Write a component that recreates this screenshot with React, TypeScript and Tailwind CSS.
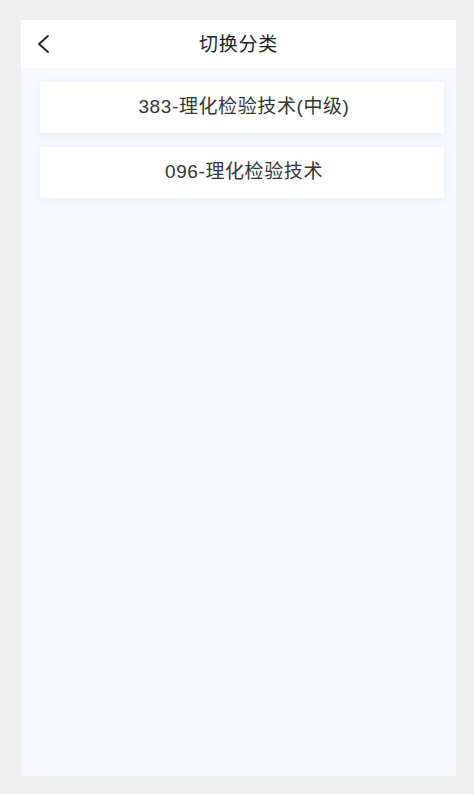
const CATEGORIES = ["383-理化检验技术(中级)", "096-理化检验技术"];

export default function App() {
  return (
    <div
      className="flex h-[794px] w-full flex-col bg-[#efefef] pb-[18px] pl-[21px] pr-[18px] pt-5 text-[#353535]"
      style={{ fontFamily: '"Liberation Sans", "Noto Sans CJK SC", sans-serif' }}
    >
      <div className="flex flex-1 flex-col bg-[#f7f9fe]">
        {/* 顶部标题栏 */}
        <header className="relative flex h-12 items-center justify-center bg-white">
          <button className="absolute left-4 top-[15px] flex h-[18px] w-3 items-center" aria-label="返回">
            <svg width="12" height="18" viewBox="0 0 12 18" fill="none">
              <path d="M11 1 L2 9 L11 17" stroke="#222" strokeWidth="1.8" strokeLinecap="round" strokeLinejoin="round" />
            </svg>
          </button>
          <h1 className="mt-[3px] text-[19px] font-normal tracking-[0.8px] text-[#222]">切换分类</h1>
        </header>

        {/* 分类列表 */}
        <div className="flex flex-col gap-[14px] pl-[19px] pr-3 pt-[14px]">
          {CATEGORIES.map((name) => (
            <div
              key={name}
              className="flex h-[51px] items-center justify-center bg-white pl-1 text-[19px] tracking-[0.6px] shadow-[0_2px_8px_rgba(180,200,240,0.25)]"
            >
              {name}
            </div>
          ))}
        </div>
      </div>
    </div>
  );
}
